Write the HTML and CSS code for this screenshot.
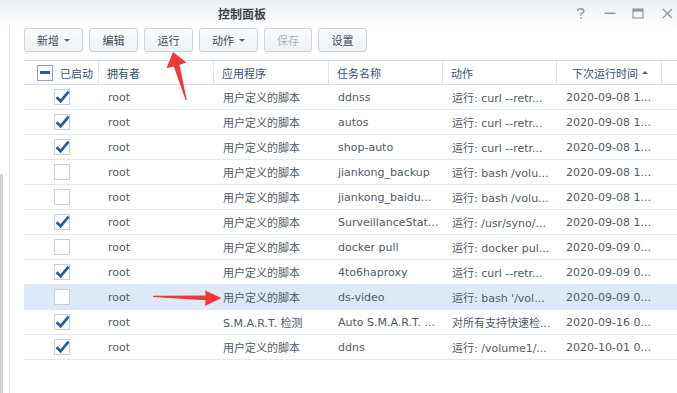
FILE: index.html
```html
<!DOCTYPE html>
<html lang="zh-CN">

<head>
    <meta charset="UTF-8">
    <meta name="viewport" content="width=device-width, initial-scale=1.0">
    <title>控制面板</title>
    <link rel="stylesheet" href="styles.css">
</head>

<body>
    <div class="window">
        <div class="titlebar">
            <span class="title">控制面板</span>
            <div class="win-controls">
                <svg class="ic-help" width="10" height="11" viewBox="0 0 10 11"><path d="M1.5 3 Q1.5 0.8 4.5 0.8 Q7.8 0.8 7.8 3.2 Q7.8 4.8 5 5.6 L5 7.5" fill="none" stroke="#8f99a3" stroke-width="1.4"/><rect x="4.3" y="9" width="1.5" height="1.6" fill="#8f99a3"/></svg>
                <svg class="ic-min" width="12" height="11" viewBox="0 0 12 11"><rect x="0.5" y="4.5" width="11" height="1.6" fill="#8f99a3"/></svg>
                <svg class="ic-max" width="12" height="11" viewBox="0 0 12 11"><rect x="1" y="1" width="10" height="9" fill="none" stroke="#8f99a3" stroke-width="1.2"/><rect x="1" y="1" width="10" height="2.6" fill="#8f99a3"/></svg>
                <svg class="ic-close" width="11" height="11" viewBox="0 0 11 11"><path d="M1 1 L10 10 M10 1 L1 10" stroke="#8f99a3" stroke-width="1.4"/></svg>
            </div>
        </div>

        <div class="body">
            <div class="edge">
                <div class="edge-bar"></div>
            </div>

            <div class="main">
                <div class="toolbar">
                    <button class="btn wide">新增 <i class="caret"></i></button>
                    <button class="btn">编辑</button>
                    <button class="btn">运行</button>
                    <button class="btn wide">动作 <i class="caret"></i></button>
                    <button class="btn disabled">保存</button>
                    <button class="btn">设置</button>
                </div>

                <div class="grid">
                    <div class="row head">
                        <div class="cell first"><span class="cb partial"></span>已启动</div>
                        <div class="cell">拥有者</div>
                        <div class="cell">应用程序</div>
                        <div class="cell">任务名称</div>
                        <div class="cell">动作</div>
                        <div class="cell sorted">下次运行时间 <i class="sort-up"></i></div>
                        <div class="cell filler"></div>
                    </div>
                    <div id="rows"></div>
                </div>
            </div>
        </div>

        <svg class="marks" width="677" height="393" viewBox="0 0 677 393">
            <polygon points="173,52 186.5,62.5 179.5,64.8 186.8,100 185.6,100 173.8,66.4 166.5,68.3" fill="#f0373a"/>
            <polygon points="221.5,298 205,306 205.6,300.2 153,297 153,295.8 205.8,295.4 205,290.5" fill="#f0373a"/>
        </svg>
    </div>

    <script>
        const tasks = [
            [true, 'root', '用户定义的脚本', 'ddnss', '运行: curl --retr...', '2020-09-08 1...'],
            [true, 'root', '用户定义的脚本', 'autos', '运行: curl --retr...', '2020-09-08 1...'],
            [true, 'root', '用户定义的脚本', 'shop-auto', '运行: curl --retr...', '2020-09-08 1...'],
            [false, 'root', '用户定义的脚本', 'jiankong_backup', '运行: bash /volu...', '2020-09-08 1...'],
            [false, 'root', '用户定义的脚本', 'jiankong_baidu...', '运行: bash /volu...', '2020-09-08 1...'],
            [true, 'root', '用户定义的脚本', 'SurveillanceStat...', '运行: /usr/syno/...', '2020-09-08 1...'],
            [false, 'root', '用户定义的脚本', 'docker pull', '运行: docker pul...', '2020-09-09 0...'],
            [true, 'root', '用户定义的脚本', '4to6haproxy', '运行: curl --retr...', '2020-09-09 0...'],
            [false, 'root', '用户定义的脚本', 'ds-video', "运行: bash '/vol...", '2020-09-09 0...', true],
            [true, 'root', 'S.M.A.R.T. 检测', 'Auto S.M.A.R.T. ...', '对所有支持快速检...', '2020-09-16 0...'],
            [true, 'root', '用户定义的脚本', 'ddns', '运行: /volume1/...', '2020-10-01 0...']
        ];

        const check = '<svg width="16" height="16" viewBox="0 0 16 16"><path d="M2.6 8.2 L6.6 12.2 L14.6 2.6" fill="none" stroke="#2d5a92" stroke-width="2.7"/></svg>';

        const rows = document.getElementById('rows');
        tasks.forEach(function (t) {
            const row = document.createElement('div');
            row.className = 'row' + (t[6] ? ' selected' : '');
            let html = '<div class="cell first center"><span class="cb">' + (t[0] ? check : '') + '</span></div>';
            for (let i = 1; i < 6; i++) {
                html += '<div class="cell">' + t[i] + '</div>';
            }
            html += '<div class="cell filler"></div>';
            row.innerHTML = html;
            rows.appendChild(row);
        });
    </script>
</body>

</html>
```

FILE: styles.css
```css
body {
    margin: 0;
    font-family: "DejaVu Sans", "Noto Sans CJK SC", sans-serif;
    font-size: 11px;
    color: #505a65;
    background-color: #ffffff;
}

.window {
    position: relative;
    width: 677px;
    height: 393px;
    overflow: hidden;
    display: flex;
    flex-direction: column;
}

.titlebar {
    height: 26px;
    display: flex;
    align-items: center;
    background: linear-gradient(#eceff2, #f6f8f9 60%, #fdfdfe);
}

.title {
    margin-left: 218px;
    font-family: "Noto Sans CJK SC", sans-serif;
    font-size: 12px;
    font-weight: bold;
    color: #3c4249;
}

.win-controls {
    margin-left: auto;
    margin-right: 4px;
    display: flex;
    align-items: center;
    padding-top: 1px;
}

.win-controls svg {
    display: block;
}

.ic-min,
.ic-close {
    margin-left: 18px;
}

.ic-max {
    margin-left: 16px;
}

.body {
    flex: 1;
    display: flex;
}

.edge {
    width: 9px;
    display: flex;
    flex-direction: column;
    padding-top: 148px;
}

.edge-bar {
    flex: 1;
    width: 3px;
    background-color: #cfd2d6;
}

.main {
    flex: 1;
    border-left: 1px solid #dfe3e7;
    padding: 2px 0 0 14px;
}

.toolbar {
    display: flex;
    gap: 6px;
}

.btn {
    height: 24px;
    width: 49px;
    padding: 0;
    font-family: "Noto Sans CJK SC", sans-serif;
    font-size: 11px;
    color: #3f4a56;
    background: linear-gradient(#fafbfd, #eef2f6);
    border: 1px solid #cbd4dd;
    border-radius: 3px;
    display: flex;
    align-items: center;
    justify-content: center;
    gap: 5px;
}

.btn.wide {
    width: 59px;
}

.btn.wide + .btn.wide {
    width: 60px;
}

.btn.disabled {
    width: 48px;
    color: #a9b1b9;
}

.caret {
    width: 0;
    height: 0;
    border-left: 3px solid transparent;
    border-right: 3px solid transparent;
    border-top: 3px solid #5a6572;
}

.grid {
    margin-top: 8px;
}

.row {
    display: grid;
    grid-template-columns: 75px 115px 115px 114px 114px 105px 1fr;
    height: 24px;
    border-bottom: 1px solid #e4e9ee;
}

.row.selected {
    background-color: #dee9f7;
}

.row.head {
    height: 23px;
    border-top: 1px solid #d4dee9;
    border-bottom: 1px solid #d4dee9;
    color: #38506c;
}

.cell {
    display: flex;
    align-items: center;
    padding-left: 9px;
    white-space: nowrap;
    overflow: hidden;
}

.head .cell {
    padding-left: 8px;
    border-right: 1px solid #dce4ed;
}

.head .cell.first {
    padding-left: 13px;
    gap: 7px;
}

.head .cell.sorted {
    padding-left: 15px;
    gap: 4px;
}

.head .cell.filler {
    border-right: none;
}

.cell.center {
    justify-content: center;
    padding-left: 1px;
}

.cb {
    width: 14px;
    height: 14px;
    border: 1px solid #c6cfda;
    background-color: #ffffff;
    display: flex;
}

.cb svg {
    overflow: visible;
    margin: -1px 0 0 -1px;
}

.cb.partial {
    border-color: #8ea1b7;
    align-items: center;
    justify-content: center;
}

.cb.partial::after {
    content: "";
    width: 10px;
    height: 3px;
    background-color: #2d5a92;
}

.sort-up {
    width: 0;
    height: 0;
    border-left: 3px solid transparent;
    border-right: 3px solid transparent;
    border-bottom: 3px solid #5a6572;
}

.marks {
    position: absolute;
    top: 0;
    left: 0;
    pointer-events: none;
}
```
